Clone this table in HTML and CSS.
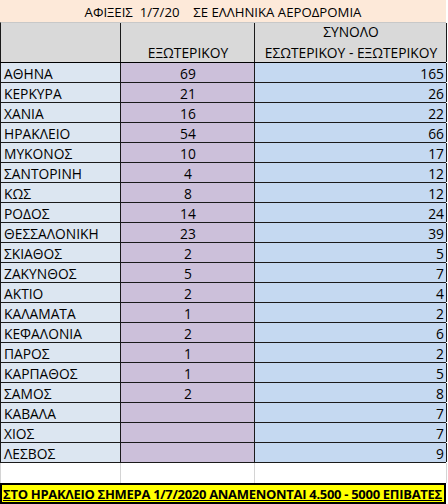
FILE: index.html
```html
<!DOCTYPE html>
<html lang="el">
<head>
<meta charset="utf-8">
<link rel="stylesheet" href="styles.css">
</head>
<body>
<div class="sheet">
  <div class="title">ΑΦΙΞΕΙΣ&nbsp; 1/7/20 &nbsp;&nbsp; ΣΕ ΕΛΛΗΝΙΚΑ ΑΕΡΟΔΡΟΜΙΑ</div>
  <div class="row head">
    <div class="c1"></div>
    <div class="c2">ΕΞΩΤΕΡΙΚΟΥ</div>
    <div class="c3"><span class="top">ΣΥΝΟΛΟ</span><span>ΕΣΩΤΕΡΙΚΟΥ - ΕΞΩΤΕΡΙΚΟΥ</span></div>
  </div>
  <div class="row"><div class="c1">ΑΘΗΝΑ</div><div class="c2">69</div><div class="c3">165</div></div>
  <div class="row"><div class="c1">ΚΕΡΚΥΡΑ</div><div class="c2">21</div><div class="c3">26</div></div>
  <div class="row"><div class="c1">ΧΑΝΙΑ</div><div class="c2">16</div><div class="c3">22</div></div>
  <div class="row"><div class="c1">ΗΡΑΚΛΕΙΟ</div><div class="c2">54</div><div class="c3">66</div></div>
  <div class="row"><div class="c1">ΜΥΚΟΝΟΣ</div><div class="c2">10</div><div class="c3">17</div></div>
  <div class="row"><div class="c1">ΣΑΝΤΟΡΙΝΗ</div><div class="c2">4</div><div class="c3">12</div></div>
  <div class="row"><div class="c1">ΚΩΣ</div><div class="c2">8</div><div class="c3">12</div></div>
  <div class="row"><div class="c1">ΡΟΔΟΣ</div><div class="c2">14</div><div class="c3">24</div></div>
  <div class="row"><div class="c1">ΘΕΣΣΑΛΟΝΙΚΗ</div><div class="c2">23</div><div class="c3">39</div></div>
  <div class="row"><div class="c1">ΣΚΙΑΘΟΣ</div><div class="c2">2</div><div class="c3">5</div></div>
  <div class="row"><div class="c1">ΖΑΚΥΝΘΟΣ</div><div class="c2">5</div><div class="c3">7</div></div>
  <div class="row"><div class="c1">ΑΚΤΙΟ</div><div class="c2">2</div><div class="c3">4</div></div>
  <div class="row"><div class="c1">ΚΑΛΑΜΑΤΑ</div><div class="c2">1</div><div class="c3">2</div></div>
  <div class="row"><div class="c1">ΚΕΦΑΛΟΝΙΑ</div><div class="c2">2</div><div class="c3">6</div></div>
  <div class="row"><div class="c1">ΠΑΡΟΣ</div><div class="c2">1</div><div class="c3">2</div></div>
  <div class="row"><div class="c1">ΚΑΡΠΑΘΟΣ</div><div class="c2">1</div><div class="c3">5</div></div>
  <div class="row"><div class="c1">ΣΑΜΟΣ</div><div class="c2">2</div><div class="c3">8</div></div>
  <div class="row"><div class="c1">ΚΑΒΑΛΑ</div><div class="c2"></div><div class="c3">7</div></div>
  <div class="row"><div class="c1">ΧΙΟΣ</div><div class="c2"></div><div class="c3">7</div></div>
  <div class="row"><div class="c1">ΛΕΣΒΟΣ</div><div class="c2"></div><div class="c3">9</div></div>
  <div class="row blank"><div class="c1"></div><div class="c2"></div><div class="c3"></div></div>
  <div class="banner">ΣΤΟ ΗΡΑΚΛΕΙΟ ΣΗΜΕΡΑ 1/7/2020 ΑΝΑΜΕΝΟΝΤΑΙ 4.500 - 5000 ΕΠΙΒΑΤΕΣ</div>
</div>
</body>
</html>
```
FILE: styles.css
```css
html, body {
  margin: 0;
  padding: 0;
  background: #ffffff;
}
body {
  font-family: "Open Sans", "Liberation Sans", sans-serif;
  font-size: 13.8px;
  color: #000;
}
.sheet {
  width: 446px;
  display: flex;
  flex-direction: column;
}
.title {
  height: 22px;
  line-height: 24px;
  background: #fde9d9;
  text-align: center;
  font-size: 13.2px;
  white-space: pre;
}
.row {
  display: grid;
  grid-template-columns: 120px 134px 192px;
  height: 20px;
  box-sizing: border-box;
  border-bottom: 1px solid #1a1a1a;
  border-left: 1px solid #1a1a1a;
  line-height: 21px;
}
.row > div {
  box-sizing: border-box;
  border-right: 1px solid #1a1a1a;
  padding: 0 2px 0 3px;
  white-space: nowrap;
  overflow: hidden;
}
.row .c1 { background: #dce6f1; }
.row .c2 { background: #ccc0da; text-align: center; }
.row .c3 { background: #c5d9f1; text-align: right; }
.row.head {
  height: 41px;
  border-bottom: 2px solid #000;
  border-top: 1px solid #c8c8c8;
  line-height: 18px;
}
.row.head > div {
  background: #d9d9d9;
  display: flex;
  flex-direction: column;
  justify-content: flex-end;
  align-items: center;
  text-align: center;
  padding-bottom: 0;
  overflow: visible;
}
.row.head .top {
  margin-bottom: 3px;
}
.banner {
  height: 21px;
  box-sizing: border-box;
  background: #ffff00;
  border: 2px solid #000;
  font-weight: 700;
  text-decoration: underline;
  font-size: 13px;
  letter-spacing: -0.3px;
  line-height: 18px;
  padding-left: 1px;
  white-space: nowrap;
  overflow: hidden;
}
.row.blank {
  border-bottom: none;
  border-left: 1px solid #d4d4d4;
}
.row.blank > div {
  background: #ffffff;
  border-right: 1px solid #d4d4d4;
}
```
